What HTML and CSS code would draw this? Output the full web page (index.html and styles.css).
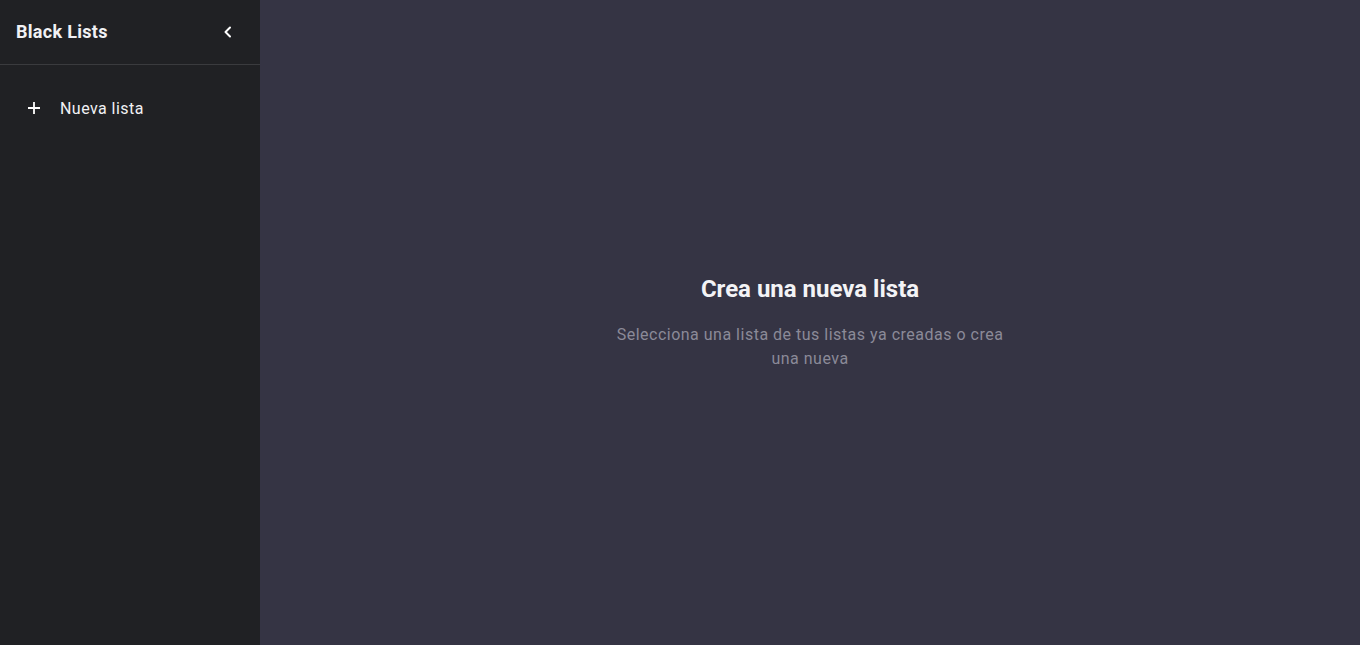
FILE: index.html
```html
<!DOCTYPE html>
<html lang="es">
<head>
<meta charset="utf-8">
<title>Black Lists</title>
<link rel="stylesheet" href="styles.css">
</head>
<body>
<div class="app">
  <aside class="sidebar">
    <header class="sidebar-header">
      <h1 class="sidebar-title">Black Lists</h1>
      <button class="collapse-btn" aria-label="Colapsar">
        <svg width="16" height="16" viewBox="0 0 16 16"><path d="M10 3.5 L5.5 8 L10 12.5" fill="none" stroke="#ffffff" stroke-width="2" stroke-linecap="round" stroke-linejoin="round"/></svg>
      </button>
    </header>
    <nav class="sidebar-nav">
      <button class="new-list">
        <svg width="14" height="14" viewBox="0 0 14 14"><path d="M7 1 V13 M1 7 H13" stroke="#ffffff" stroke-width="1.8" fill="none"/></svg>
        <span>Nueva lista</span>
      </button>
    </nav>
  </aside>
  <main class="main">
    <div class="empty">
      <h2 class="empty-title">Crea una nueva lista</h2>
      <p class="empty-text">Selecciona una lista de tus listas ya creadas o crea una nueva</p>
    </div>
  </main>
</div>
</body>
</html>
```

FILE: styles.css
```css
* { box-sizing: border-box; }
html, body { margin: 0; height: 100%; }
body {
  font-family: Roboto, "Noto Sans", Arial, sans-serif;
  background: #353444;
  color: #ffffff;
}
.app {
  display: flex;
  height: 100vh;
}
.sidebar {
  width: 260px;
  flex-shrink: 0;
  background: #202124;
  display: flex;
  flex-direction: column;
}
.sidebar-header {
  height: 65px;
  display: flex;
  align-items: center;
  justify-content: space-between;
  padding: 0 24px 0 16px;
  border-bottom: 1px solid #3a3b3e;
}
.sidebar-title {
  margin: 0;
  font-size: 18px;
  font-weight: 700;
  letter-spacing: 0.3px;
  color: #f1f1f4;
  padding-bottom: 1px;
}
.collapse-btn {
  background: none;
  border: 0;
  padding: 0;
  display: flex;
  align-items: center;
  cursor: pointer;
}
.sidebar-nav {
  padding: 26px 0 0 0;
}
.new-list {
  display: flex;
  align-items: center;
  gap: 19px;
  background: none;
  border: 0;
  padding: 0 0 0 27px;
  color: #f1f1f4;
  font-family: inherit;
  font-size: 16px;
  letter-spacing: 0.45px;
  height: 34px;
  cursor: pointer;
}
.main {
  flex: 1;
  display: flex;
  align-items: center;
  justify-content: center;
}
.empty {
  text-align: center;
  max-width: 400px;
  padding-bottom: 2px;
}
.empty-title {
  margin: 0 0 19px 0;
  padding-top: 2px;
  font-size: 24px;
  font-weight: 700;
  letter-spacing: 0;
  color: #f3f3f6;
  line-height: 30px;
}
.empty-text {
  margin: 0;
  font-size: 16px;
  line-height: 24px;
  color: #8b8a98;
  letter-spacing: 0.5px;
}
```
